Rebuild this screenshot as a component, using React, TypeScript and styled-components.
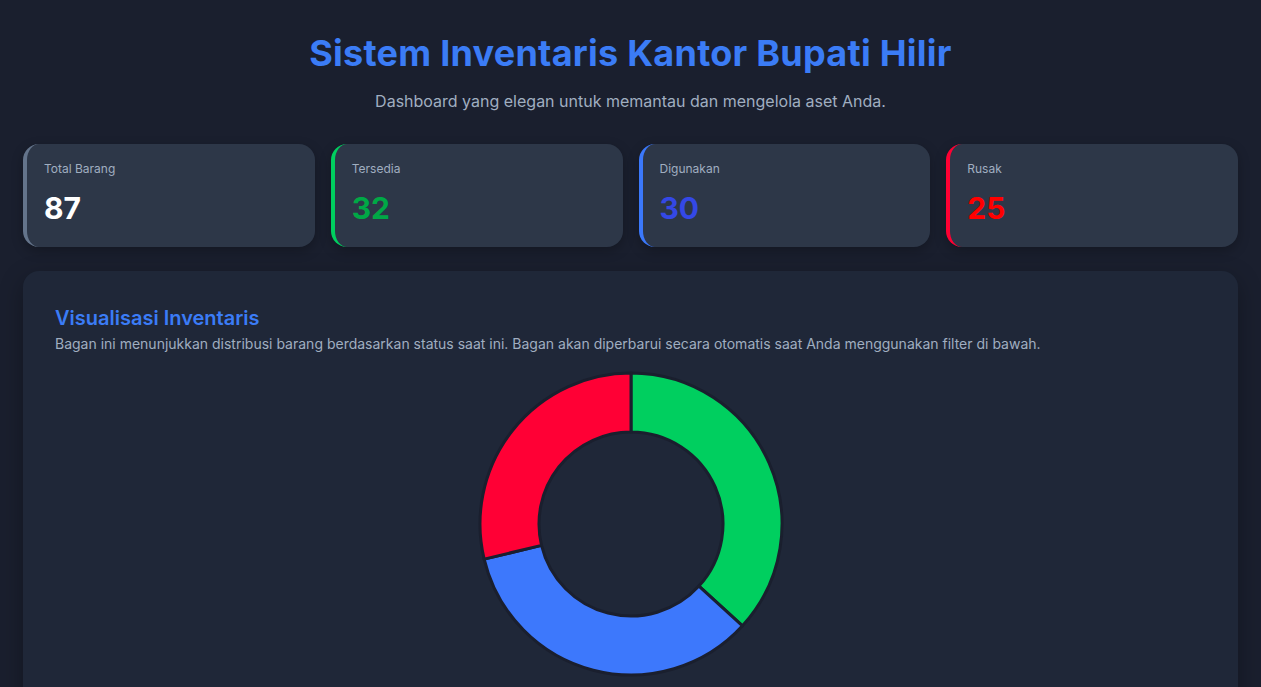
import React from "react";
import styled, { createGlobalStyle } from "styled-components";

const GlobalStyle = createGlobalStyle`
  * { box-sizing: border-box; }
  html, body { margin: 0; padding: 0; background: #1a1f2e; }
  body {
    font-family: Inter, "Noto Sans", "Liberation Sans", sans-serif;
    color: #e2e8f0;
    overflow: hidden;
  }
`;

const Page = styled.div`
  padding: 33px 23px 24px;
  min-height: 687px;
`;

const Header = styled.header`
  text-align: center;
  margin-bottom: 31px;
`;

const Title = styled.h1`
  margin: 0 0 16px;
  font-size: 36px;
  line-height: 40px;
  font-weight: 700;
  color: #3b7cf6;
  letter-spacing: 0.25px;
`;

const Subtitle = styled.p`
  margin: 0;
  font-size: 16px;
  line-height: 24px;
  color: #a0aec0;
`;

const StatsGrid = styled.div`
  display: grid;
  grid-template-columns: repeat(4, 1fr);
  gap: 16px;
  margin-bottom: 24px;
`;

const StatCard = styled.div<{ $accent: string }>`
  background: #2d3748;
  border-radius: 16px;
  border-left: 4px solid ${(p) => p.$accent};
  padding: 17px 16px 16px 17px;
  height: 103px;
  box-shadow: 0 4px 12px rgba(0, 0, 0, 0.25);
`;

const StatLabel = styled.div`
  font-size: 12px;
  line-height: 16px;
  color: #a0aec0;
  margin-bottom: 9px;
`;

const StatValue = styled.div<{ $color: string }>`
  font-size: 30px;
  line-height: 45px;
  font-weight: 700;
  color: ${(p) => p.$color};
`;

const Panel = styled.section`
  background: #1f2738;
  border-radius: 16px;
  padding: 33px 32px 32px;
  box-shadow: 0 8px 24px rgba(0, 0, 0, 0.3);
`;

const PanelTitle = styled.h2`
  margin: 0 0 2px;
  font-size: 20px;
  line-height: 28px;
  font-weight: 600;
  color: #3b7cf6;
`;

const PanelText = styled.p`
  margin: 0;
  font-size: 14px;
  line-height: 20px;
  color: #a0aec0;
`;

const ChartWrap = styled.div`
  display: flex;
  justify-content: center;
  margin-top: 16px;
`;

const stats = [
  { label: "Total Barang", value: 87, accent: "#64748b", color: "#ffffff" },
  { label: "Tersedia", value: 32, accent: "#00cf5f", color: "#00a846" },
  { label: "Digunakan", value: 30, accent: "#3b78fb", color: "#3448e6" },
  { label: "Rusak", value: 25, accent: "#ff0033", color: "#ff0000" },
];

const slices = [
  { value: 32, color: "#00cf5f" },
  { value: 30, color: "#3d78fc" },
  { value: 25, color: "#ff0035" },
];

const SIZE = 308;
const C = SIZE / 2;
const R = 151;
const r = 92;

function pt(rad: number, deg: number) {
  const a = (deg * Math.PI) / 180;
  return [C + rad * Math.sin(a), C - rad * Math.cos(a)];
}

function arc(a0: number, a1: number) {
  const large = a1 - a0 > 180 ? 1 : 0;
  const [x0, y0] = pt(R, a0);
  const [x1, y1] = pt(R, a1);
  const [x2, y2] = pt(r, a1);
  const [x3, y3] = pt(r, a0);
  return `M${x0} ${y0} A${R} ${R} 0 ${large} 1 ${x1} ${y1} L${x2} ${y2} A${r} ${r} 0 ${large} 0 ${x3} ${y3} Z`;
}

function Donut() {
  const total = slices.reduce((s, x) => s + x.value, 0);
  let acc = 0;
  return (
    <svg width={SIZE} height={SIZE} viewBox={`0 0 ${SIZE} ${SIZE}`}>
      {slices.map((s, i) => {
        const a0 = (acc / total) * 360;
        acc += s.value;
        const a1 = (acc / total) * 360;
        return (
          <path
            key={i}
            d={arc(a0, a1)}
            fill={s.color}
            stroke="#1a1f2e"
            strokeWidth={3}
            strokeLinejoin="round"
          />
        );
      })}
    </svg>
  );
}

export default function App() {
  return (
    <>
      <GlobalStyle />
      <Page>
        <Header>
          <Title>Sistem Inventaris Kantor Bupati Hilir</Title>
          <Subtitle>Dashboard yang elegan untuk memantau dan mengelola aset Anda.</Subtitle>
        </Header>
        <StatsGrid>
          {stats.map((s) => (
            <StatCard key={s.label} $accent={s.accent}>
              <StatLabel>{s.label}</StatLabel>
              <StatValue $color={s.color}>{s.value}</StatValue>
            </StatCard>
          ))}
        </StatsGrid>
        <Panel>
          <PanelTitle>Visualisasi Inventaris</PanelTitle>
          <PanelText>
            Bagan ini menunjukkan distribusi barang berdasarkan status saat ini. Bagan akan diperbarui secara otomatis saat Anda menggunakan filter di bawah.
          </PanelText>
          <ChartWrap>
            <Donut />
          </ChartWrap>
        </Panel>
      </Page>
    </>
  );
}
